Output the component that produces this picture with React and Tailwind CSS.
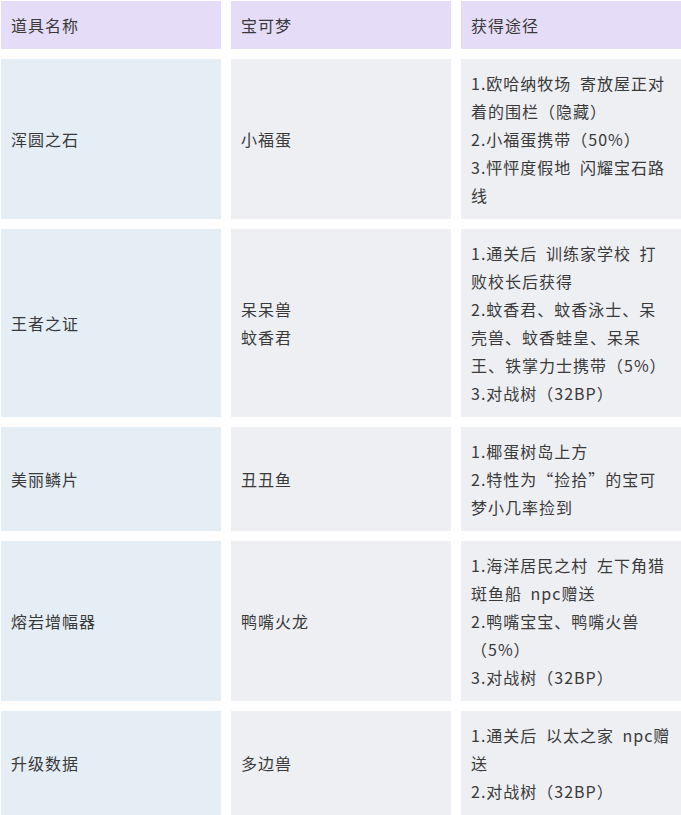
import React from "react";

const rows = [
  {
    item: "浑圆之石",
    mons: ["小福蛋"],
    ways: ["1.欧哈纳牧场 寄放屋正对着的围栏（隐藏）", "2.小福蛋携带（50%）", "3.怦怦度假地 闪耀宝石路线"],
  },
  {
    item: "王者之证",
    mons: ["呆呆兽", "蚊香君"],
    ways: ["1.通关后 训练家学校 打败校长后获得", "2.蚊香君、蚊香泳士、呆壳兽、蚊香蛙皇、呆呆王、铁掌力士携带（5%）", "3.对战树（32BP）"],
  },
  {
    item: "美丽鳞片",
    mons: ["丑丑鱼"],
    ways: ["1.椰蛋树岛上方", "2.特性为“捡拾”的宝可梦小几率捡到"],
  },
  {
    item: "熔岩增幅器",
    mons: ["鸭嘴火龙"],
    ways: ["1.海洋居民之村 左下角猎斑鱼船 npc赠送", "2.鸭嘴宝宝、鸭嘴火兽（5%）", "3.对战树（32BP）"],
  },
  {
    item: "升级数据",
    mons: ["多边兽"],
    ways: ["1.通关后 以太之家 npc赠送", "2.对战树（32BP）"],
  },
];

function Cell({ className, children }) {
  return (
    <div className={`flex items-center p-[10px] ${className}`}>
      <div>{children}</div>
    </div>
  );
}

export default function App() {
  return (
    <div
      className="w-[681px] bg-white pt-[1px] pl-[1px] text-[16px] leading-[28px] tracking-[1px] [word-spacing:4px] text-[#3a3a3a]"
      style={{ fontFamily: '"Noto Sans CJK SC", "Noto Sans", sans-serif' }}
    >
      <div className="grid grid-cols-[220px_220px_220px] gap-[10px]">
        <Cell className="bg-[#e5dcf7]">道具名称</Cell>
        <Cell className="bg-[#e5dcf7]">宝可梦</Cell>
        <Cell className="bg-[#e5dcf7]">获得途径</Cell>
        {rows.map((r) => (
          <React.Fragment key={r.item}>
            <Cell className="bg-[#e5edf5]">{r.item}</Cell>
            <Cell className="bg-[#eeeff3]">
              {r.mons.map((m) => (
                <div key={m}>{m}</div>
              ))}
            </Cell>
            <Cell className="bg-[#eeeff3]">
              {r.ways.map((w) => (
                <div key={w}>{w}</div>
              ))}
            </Cell>
          </React.Fragment>
        ))}
      </div>
    </div>
  );
}
